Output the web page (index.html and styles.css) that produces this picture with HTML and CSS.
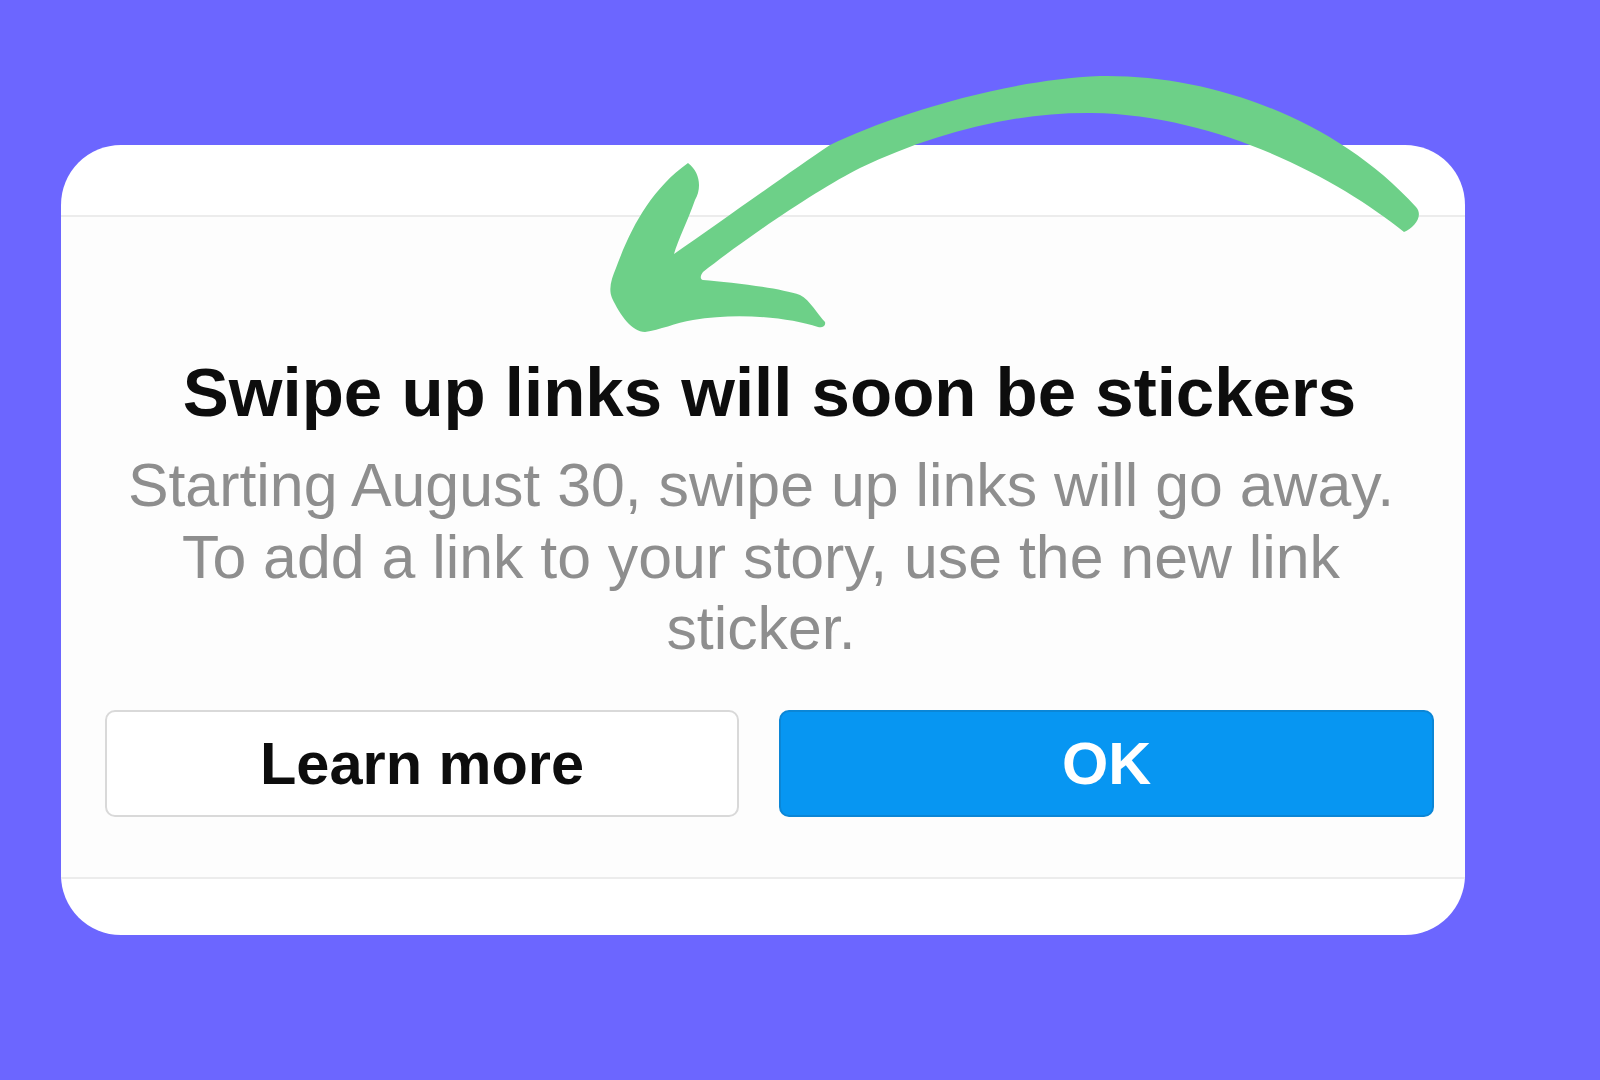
FILE: index.html
```html
<!DOCTYPE html>
<html lang="en">
<head>
    <meta charset="UTF-8">
    <meta name="viewport" content="width=device-width, initial-scale=1.0">
    <title>Swipe up links will soon be stickers</title>
    <link rel="stylesheet" href="styles.css">
</head>
<body>
    <div class="dialog">
        <div class="dialog-top"></div>

        <div class="dialog-body">
            <h1 class="dialog-title">Swipe up links will soon be stickers</h1>
            <p class="dialog-text">Starting August 30, swipe up links will go away. To add a link to your story, use the new link sticker.</p>

            <div class="dialog-actions">
                <button class="btn btn-light">Learn more</button>
                <button class="btn btn-blue">OK</button>
            </div>
        </div>

        <div class="dialog-foot"></div>
    </div>

    <!-- Hand drawn arrow over the card -->
    <svg class="arrow" viewBox="0 0 1600 1080" aria-hidden="true">
        <path d="M 674 254
                 C 720 222, 790 172, 830 145
                 C 885 118, 1000 80, 1100 76
                 C 1210 74, 1335 118, 1416 207
                 C 1424 216, 1414 228, 1404 232
                 C 1340 180, 1220 115, 1092 113
                 C 1010 112, 930 135, 860 168
                 C 820 188, 750 235, 703 272
                 C 700 276, 700 279, 703 280
                 C 730 282, 780 288, 800 295
                 C 810 300, 818 315, 825 322
                 C 826 326, 822 328, 818 327
                 C 790 318, 740 312, 693 320
                 C 675 323, 660 330, 645 332
                 C 632 332, 620 315, 612 298
                 C 608 288, 612 278, 616 268
                 C 630 230, 650 190, 688 163
                 C 700 172, 702 188, 695 200
                 C 688 220, 678 240, 674 254 Z" />
    </svg>
</body>
</html>
```

FILE: styles.css
```css
/* General Reset */
* {
    margin: 0;
    padding: 0;
    box-sizing: border-box;
}

body {
    font-family: "Liberation Sans", Arial, sans-serif;
    background-color: #6c66ff;
    width: 1600px;
    height: 1080px;
    overflow: hidden;
    position: relative;
}

/* Card */
.dialog {
    margin: 145px 0 0 61px;
    width: 1404px;
    height: 790px;
    background-color: #fff;
    border-radius: 60px;
    overflow: hidden;
    display: flex;
    flex-direction: column;
}

.dialog-top {
    height: 72px;
    flex-shrink: 0;
    border-bottom: 2px solid #ececec;
}

.dialog-body {
    flex: 1;
    background-color: #fdfdfd;
    padding: 136px 31px 0 44px;
    text-align: center;
}

.dialog-title {
    font-size: 69px;
    line-height: 80px;
    font-weight: 700;
    color: #0d0d0d;
}

.dialog-text {
    margin-top: 17px;
    padding-right: 17px;
    font-size: 60.8px;
    line-height: 71.7px;
    color: #8e8e8e;
}

/* Buttons */
.dialog-actions {
    margin-top: 45px;
    display: grid;
    grid-template-columns: 634px 655px;
    gap: 40px;
}

.btn {
    height: 107px;
    font-family: inherit;
    font-size: 59.5px;
    font-weight: 700;
    border-radius: 10px;
    cursor: pointer;
}

.btn-light {
    background-color: #fff;
    color: #0d0d0d;
    border: 2px solid #d9d9d9;
}

.btn-blue {
    background-color: #0796f2;
    color: #fff;
    border: 2px solid #0b86d6;
}

.dialog-foot {
    height: 58px;
    flex-shrink: 0;
    border-top: 2px solid #ececec;
}

/* Arrow */
.arrow {
    position: absolute;
    top: 0;
    left: 0;
    width: 1600px;
    height: 1080px;
    pointer-events: none;
}

.arrow path {
    fill: #6dd088;
}
```
